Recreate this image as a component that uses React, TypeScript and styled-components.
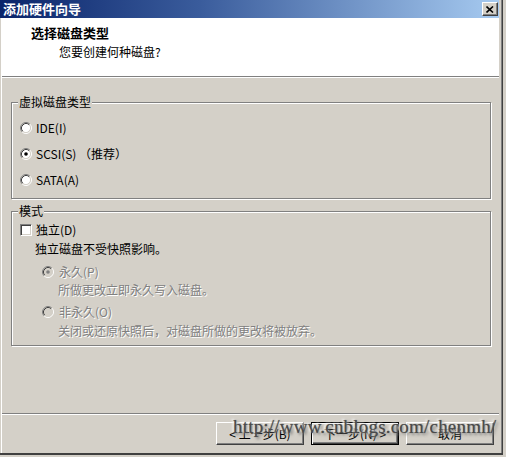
import React from "react";
import styled, { createGlobalStyle } from "styled-components";

const Global = createGlobalStyle`
  html, body { margin: 0; padding: 0; background: #d4d0c8; }
  body { font-family: "Noto Sans CJK SC", "Liberation Sans", sans-serif; font-size: 12px; color: #000; }
  * { box-sizing: border-box; }
`;

const Screen = styled.div`
  position: relative;
  width: 506px;
  height: 457px;
  background: #d4d0c8;
  overflow: hidden;
`;

const Window = styled.div`
  width: 503px;
  height: 455px;
  display: flex;
  flex-direction: column;
  border-right: 1px solid #404040;
  border-bottom: 2px solid #404040;
  padding-right: 3px;
  box-shadow: inset -1px 0 0 #808080;
  background: #d4d0c8;
`;

const TitleBar = styled.div`
  height: 18px;
  flex: none;
  display: flex;
  align-items: center;
  justify-content: space-between;
  padding: 0 1px 0 3px;
  background: linear-gradient(90deg, #0a246a 0%, #3a5c9c 40%, #a6caf0 100%);
`;

const TitleText = styled.span`
  color: #fff;
  font-weight: bold;
  font-size: 13px;
  line-height: 18px;
`;

const CloseButton = styled.div`
  width: 16px;
  height: 14px;
  display: flex;
  align-items: center;
  justify-content: center;
  background: #d4d0c8;
  border: 1px solid;
  border-color: #fff #404040 #404040 #fff;
  box-shadow: inset -1px -1px 0 #808080;
`;

const Body = styled.div`
  flex: 1;
  display: flex;
  flex-direction: column;
  border-left: 1px solid #d4d0c8;
  box-shadow: inset 1px 0 0 #fff;
  padding-left: 1px;
`;

const Header = styled.div`
  height: 59px;
  flex: none;
  background: #fff;
  border-bottom: 1px solid #808080;
  box-shadow: 0 1px 0 #fff;
  margin-bottom: 1px;
  padding: 8px 0 0 29px;
  display: flex;
  flex-direction: column;
  gap: 5px;
`;

const HeaderTitle = styled.div`
  font-weight: bold;
  font-size: 13px;
  line-height: 14px;
`;

const HeaderSub = styled.div`
  line-height: 14px;
  margin-left: 28px;
`;

const Content = styled.div`
  height: 335px;
  flex: none;
  padding: 24px 8px 0 9px;
  display: flex;
  flex-direction: column;
  gap: 12px;
`;

const Group = styled.div<{ $h: number; $pt: number }>`
  position: relative;
  height: ${(p) => p.$h}px;
  border: 1px solid #808080;
  box-shadow: inset 1px 1px 0 #fff, 1px 1px 0 #fff;
  padding: ${(p) => p.$pt}px 0 0 8px;
  display: flex;
  flex-direction: column;
`;

const Legend = styled.span`
  position: absolute;
  left: 6px;
  top: -8px;
  padding: 0 1px;
  line-height: 14px;
  background: #d4d0c8;
`;

const Row = styled.label<{ $mt?: number; $ml?: number; $gap?: number }>`
  height: 18px;
  display: flex;
  align-items: center;
  gap: ${(p) => p.$gap ?? 4}px;
  margin-top: ${(p) => p.$mt ?? 0}px;
  margin-left: ${(p) => p.$ml ?? 0}px;
  line-height: 14px;
`;

const Text = styled.span<{ $disabled?: boolean }>`
  color: ${(p) => (p.$disabled ? "#808080" : "#000")};
  text-shadow: ${(p) => (p.$disabled ? "1px 1px 0 #fff" : "none")};
  white-space: nowrap;
`;

const Check = styled.span`
  width: 12px;
  height: 12px;
  flex: none;
  background: #fff;
  border: 1px solid;
  border-color: #808080 #fff #fff #808080;
  box-shadow: inset 1px 1px 0 #404040, inset -1px -1px 0 #d4d0c8;
`;

const Separator = styled.div`
  height: 2px;
  flex: none;
  border-top: 1px solid #808080;
  border-bottom: 1px solid #fff;
`;

const ButtonBar = styled.div`
  flex: 1;
  display: flex;
  justify-content: flex-end;
  align-items: flex-start;
  gap: 7px;
  padding: 7px 5px 0 0;
`;

const Button = styled.div<{ $default?: boolean }>`
  width: 88px;
  height: 23px;
  display: flex;
  align-items: center;
  justify-content: center;
  background: #d4d0c8;
  border: 1px solid;
  border-color: ${(p) => (p.$default ? "#000" : "#fff #404040 #404040 #fff")};
  box-shadow: ${(p) =>
    p.$default
      ? "inset 1px 1px 0 #fff, inset -1px -1px 0 #404040, inset -2px -2px 0 #808080"
      : "inset -1px -1px 0 #808080"};
  line-height: 14px;
  white-space: nowrap;
`;

const Watermark = styled.div`
  position: absolute;
  left: 233px;
  top: 417px;
  font-family: "Liberation Serif", "DejaVu Serif", serif;
  font-size: 19px;
  line-height: 20px;
  letter-spacing: 0.2px;
  color: #4a4a4a;
  text-shadow: -2px -1px 2px #f4f4f4, 2px 2px 3px #7a7a7a, 0 0 1px #606060;
  white-space: nowrap;
  pointer-events: none;
`;

function Radio({ checked, disabled }: { checked?: boolean; disabled?: boolean }) {
  return (
    <svg width="12" height="12" viewBox="0 0 12 12" style={{ flex: "none" }}>
      <circle cx="6" cy="6" r="4.5" fill={disabled ? "#d4d0c8" : "#fff"} />
      <path d="M2.11 9.89 A5.5 5.5 0 0 1 9.89 2.11" stroke="#808080" fill="none" />
      <path d="M9.89 2.11 A5.5 5.5 0 0 1 2.11 9.89" stroke="#fff" fill="none" />
      <path d="M2.82 9.18 A4.5 4.5 0 0 1 9.18 2.82" stroke="#404040" fill="none" />
      <path d="M9.18 2.82 A4.5 4.5 0 0 1 2.82 9.18" stroke="#d4d0c8" fill="none" />
      {checked && <circle cx="6" cy="6" r="1.8" fill={disabled ? "#808080" : "#000"} />}
    </svg>
  );
}

export default function App() {
  return (
    <>
      <Global />
      <Screen>
        <Window>
          <TitleBar>
            <TitleText>添加硬件向导</TitleText>
            <CloseButton>
              <svg width="8" height="7" viewBox="0 0 8 7">
                <path d="M0.5 0.5 L7 6.5 M7 0.5 L0.5 6.5" stroke="#000" strokeWidth="1.6" />
              </svg>
            </CloseButton>
          </TitleBar>
          <Body>
            <Header>
              <HeaderTitle>选择磁盘类型</HeaderTitle>
              <HeaderSub>您要创建何种磁盘?</HeaderSub>
            </Header>
            <Content>
              <Group $h={97} $pt={16}>
                <Legend>虚拟磁盘类型</Legend>
                <Row>
                  <Radio />
                  <Text>IDE(I)</Text>
                </Row>
                <Row $mt={8}>
                  <Radio checked />
                  <Text>SCSI(S) （推荐）</Text>
                </Row>
                <Row $mt={8}>
                  <Radio />
                  <Text>SATA(A)</Text>
                </Row>
              </Group>
              <Group $h={135} $pt={9}>
                <Legend>模式</Legend>
                <Row>
                  <Check />
                  <Text>独立(D)</Text>
                </Row>
                <Row $mt={1} $ml={15}>
                  <Text>独立磁盘不受快照影响。</Text>
                </Row>
                <Row $mt={5} $ml={22} $gap={5}>
                  <Radio checked disabled />
                  <Text $disabled>永久(P)</Text>
                </Row>
                <Row $ml={38}>
                  <Text $disabled>所做更改立即永久写入磁盘。</Text>
                </Row>
                <Row $mt={4} $ml={22} $gap={5}>
                  <Radio disabled />
                  <Text $disabled>非永久(O)</Text>
                </Row>
                <Row $mt={1} $ml={38}>
                  <Text $disabled>关闭或还原快照后，对磁盘所做的更改将被放弃。</Text>
                </Row>
              </Group>
            </Content>
            <Separator />
            <ButtonBar>
              <Button>&lt; 上一步(B)</Button>
              <Button $default>下一步(N) &gt;</Button>
              <Button>取消</Button>
            </ButtonBar>
          </Body>
        </Window>
        <Watermark>http://www.cnblogs.com/chenmh/</Watermark>
      </Screen>
    </>
  );
}
